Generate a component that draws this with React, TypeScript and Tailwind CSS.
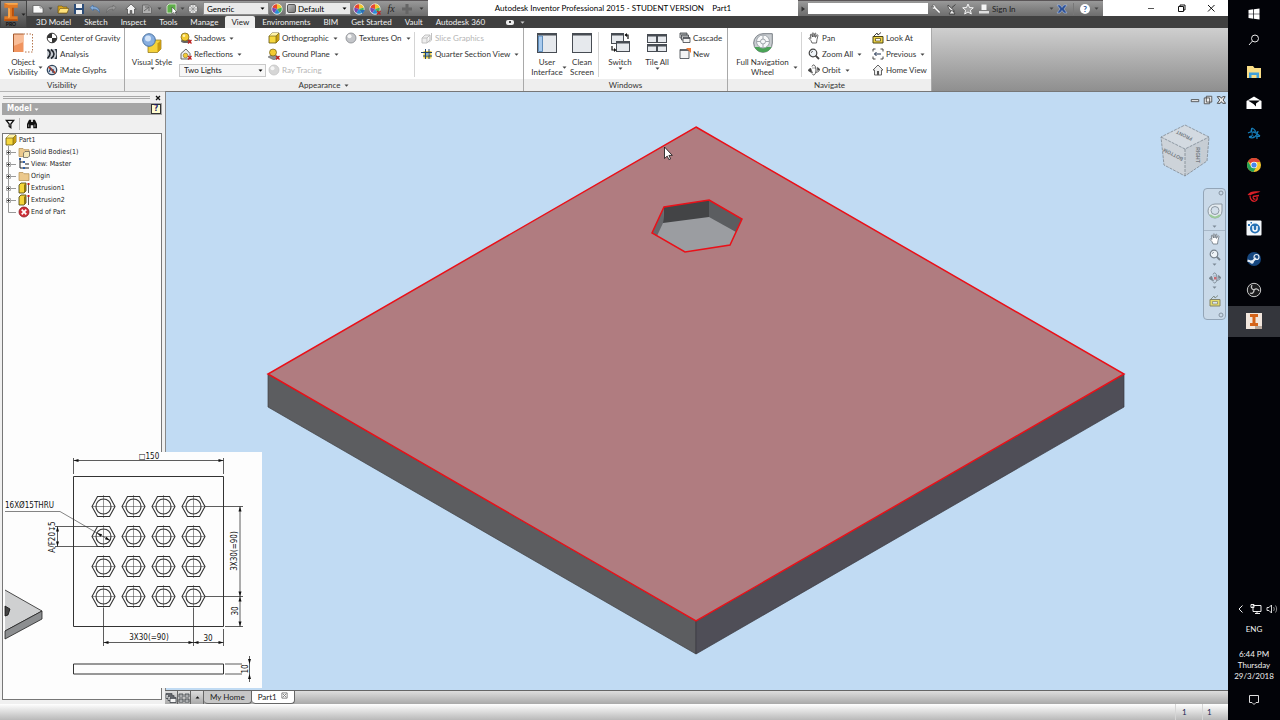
import type { ReactNode } from "react";

type IconProps = { children: ReactNode; className?: string; box?: string };

const Icon = ({ children, className = "size-3", box = "0 0 12 12" }: IconProps) => (
  <svg viewBox={box} className={`shrink-0 ${className}`} fill="none" aria-hidden="true">
    {children}
  </svg>
);

const Caret = ({ className = "text-[#444]" }: { className?: string }) => (
  <svg viewBox="0 0 5 3" className={`h-[3px] w-[5px] shrink-0 ${className}`} fill="currentColor" aria-hidden="true">
    <path d="M0.5 0.5h4L2.5 2.8z" />
  </svg>
);

/* ---------- shared icon pieces ---------- */

const RedX = () => <path d="M8 8l3.5 3.5M11.5 8L8 11.5" stroke="#c02020" strokeWidth="1.3" />;

const ColorWheel = () => (
  <>
    <circle cx="6" cy="6" r="5.2" fill="#eee" />
    <path d="M6 6L1 4.5A5.2 5.2 0 0 1 6 .8z" fill="#e8472e" />
    <path d="M6 6V.8a5.2 5.2 0 0 1 5 3.7z" fill="#f3c62f" />
    <path d="M6 6l5-1.5a5.2 5.2 0 0 1-2 5.7z" fill="#49b356" />
    <path d="M6 6l3 4.2a5.2 5.2 0 0 1-6 0z" fill="#2a8fd8" />
    <path d="M6 6l-3 4.2A5.2 5.2 0 0 1 1 4.5z" fill="#7b49b0" />
    <circle cx="6" cy="6" r="5.2" stroke="#eee" strokeWidth=".7" />
  </>
);

const InventorLetter = () => (
  <>
    <path d="M3 1h14v5h-4v9h4v5H3v-5h4V6H3z" fill="#e07a25" />
    <path d="M3 1l4 2h10V1zM7 6l2 1v9l-2 1z" fill="#f9a94f" />
    <path d="M11 6h2v9h-2zM3 18h14v2H3z" fill="#b6500e" />
  </>
);

const Sphere = ({ dim = false }: { dim?: boolean }) => (
  <>
    <circle cx="6" cy="6" r="5" fill={dim ? "#d6d6d6" : "#c3c5c9"} stroke={dim ? "#c4c4c4" : "#85888d"} strokeWidth=".8" />
    <circle cx="4.5" cy="4.3" r="2" fill="#f6f6f6" />
  </>
);

const YellowBox = () => (
  <>
    <path d="M1 4l3-3h7v7l-3 3H1z" fill="#f6d73e" stroke="#5f5210" strokeWidth=".8" />
    <path d="M1 4l3-3h7L8 4z" fill="#fff3a6" />
    <path d="M8 4l3-3v7l-3 3z" fill="#c79d12" />
    <path d="M1 4h7v7M8 4l3-3" stroke="#5f5210" strokeWidth=".6" />
  </>
);

const Hand = ({ stroke = "#444" }: { stroke?: string }) => (
  <path
    d="M4 11L3 8.7 1 6.5c0-1 1-1 2 0L2.3 3c0-1 1.2-1 1.4 0l.8 2-.2-3.5c0-1 1.2-1 1.4 0L6 5l.7-3.2c.2-1 1.3-.8 1.2.2L7.5 5.4l1.3-2.2c.5-.8 1.5-.3 1.1.6L9 7.5 8.5 11z"
    fill="#fff"
    stroke={stroke}
    strokeWidth=".8"
  />
);

const Magnifier = ({ stroke = "#444" }: { stroke?: string }) => (
  <>
    <circle cx="5" cy="5" r="3.8" stroke={stroke} strokeWidth="1.2" fill="#eef3f7" />
    <path d="M7.6 7.6l3.4 3.4" stroke={stroke} strokeWidth="1.8" />
    <path d="M3.3 5A1.7 1.7 0 0 1 5 3.3" stroke={stroke} strokeWidth=".7" />
  </>
);

const OrbitShape = ({ stroke = "#444" }: { stroke?: string }) => (
  <>
    <path d="M2 4.5C0 6 1 8 5 8.3M8 8.3c4-.5 4-3 1.5-4" stroke={stroke} strokeWidth=".9" />
    <path d="M4 2.5C5-.5 8 1 8 6c0 4.5-2.5 6.5-4 3.5" stroke={stroke} strokeWidth=".9" />
    <path d="M3.5 6.3v2.2L0 6.5 2.5 4zM9.5 6.5V3.3L12 5.5zM4 4h4" fill={stroke} stroke={stroke} strokeWidth=".5" />
  </>
);

const Arrows = ({ flip = false }: { flip?: boolean }) => (
  <path
    d={flip ? "M11 4.5L8 2v1.7C4 3.7 1.5 5.5 1.5 9.5 3 7 5 6 8 6v1.7z" : "M1 4.5L4 2v1.7c4 0 6.5 1.8 6.5 5.8C9 7 7 6 4 6v1.7z"}
    fill={flip ? "#999" : "#86aeda"}
    stroke={flip ? "#5c5c5c" : "#2f5f9a"}
    strokeWidth=".5"
  />
);

/* ---------- title bar ---------- */

const QuickButton = ({ name, children }: { name: string; children: ReactNode }) => (
  <button aria-label={name} className="flex w-4 shrink-0 items-center justify-center">
    <Icon>{children}</Icon>
  </button>
);

const QuickAccess = () => (
  <div className="flex h-4 w-[401px] shrink-0 items-center border-t border-[#5a5557] bg-linear-to-b from-[#999] to-[#6d6d6d]">
    <div className="flex items-center pl-[3px]">
      <QuickButton name="New">
        <path d="M1 2.5h7l3 2.5v5H1z" fill="#fafafa" stroke="#555" strokeWidth=".7" />
        <path d="M8 2.5V5h3" stroke="#777" strokeWidth=".7" />
      </QuickButton>
      <span className="mx-0.5"><Caret /></span>
      <QuickButton name="Open">
        <path d="M1 3h4l1 1h4v6H1z" fill="#d9a520" stroke="#6e5208" strokeWidth=".6" />
        <path d="M1 10l2-4.500h9L10 10z" fill="#ffe27c" stroke="#6e5208" strokeWidth=".6" />
      </QuickButton>
      <QuickButton name="Save">
        <path d="M1 1h10v10H1z" fill="#2c4c77" />
        <path d="M3 1h6v4H3zM3 7h6v4H3z" fill="#f3f3f3" />
      </QuickButton>
      <QuickButton name="Undo"><Arrows /></QuickButton>
      <QuickButton name="Redo"><Arrows flip /></QuickButton>
    </div>
    <div className="ml-1 flex items-center">
      <QuickButton name="Home">
        <path d="M6 1L.8 6h1.7v5h2.7V7.5h1.6V11h2.7V6h1.7z" fill="#f2f2f2" stroke="#444" strokeWidth=".7" />
      </QuickButton>
      <QuickButton name="Return">
        <path d="M1.5 2h6l3 3v5.5h-9z" fill="#b0b0b0" stroke="#5f5f5f" strokeWidth=".8" />
        <path d="M3 8l5-4M8 8V4H4" stroke="#666" />
      </QuickButton>
      <span className="mx-0.5"><Caret /></span>
      <QuickButton name="Select">
        <path d="M1 3l2-2h7v7l-2 2H1z" fill="#5fae4a" stroke="#e5f3dc" strokeWidth=".8" />
        <path d="M6 4v7l1.7-1.5L9 12l1-.5L9 9h2z" fill="#fff" stroke="#333" strokeWidth=".5" />
      </QuickButton>
      <Caret />
      <QuickButton name="Appearance">
        <circle cx="6" cy="6" r="4.8" fill="#e3e3e3" stroke="#666" />
        <path d="M6 1v10M1 6h10M2.5 2.5l7 7M9.5 2.5l-7 7" stroke="#888" strokeWidth=".6" />
      </QuickButton>
    </div>
    <div className="flex flex-1 items-center pl-0.5">
      <div className="relative flex w-[66px] items-center">
        <select aria-label="Material" defaultValue="Generic" className="h-[13px] w-full appearance-none border border-[#8c8c8c] bg-[#e9e9e9] pl-[3px] leading-none text-black">
          <option>Generic</option>
        </select>
        <span className="pointer-events-none absolute right-1 flex"><Caret className="text-black" /></span>
      </div>
      <QuickButton name="Adjust colors"><ColorWheel /></QuickButton>
      <div className="relative flex w-[66px] items-center">
        <select aria-label="Appearance override" defaultValue="Default" className="h-[13px] w-full appearance-none border border-[#8c8c8c] bg-[#e9e9e9] pl-3 leading-none text-black">
          <option>Default</option>
        </select>
        <span className="pointer-events-none absolute left-0.5 size-[9px] rounded-xs border border-[#555] bg-linear-to-br from-[#bbb] to-[#777]" />
        <span className="pointer-events-none absolute right-1 flex"><Caret className="text-black" /></span>
      </div>
      <QuickButton name="Add appearance">
        <ColorWheel />
        <path d="M7 7h5l-2.5 4z" fill="#2a6fb8" />
      </QuickButton>
      <QuickButton name="Clear appearance"><ColorWheel /><RedX /></QuickButton>
      <button className="w-4 text-center font-['Liberation_Serif',serif] text-[10px] leading-none text-[#222] italic">fx</button>
      <QuickButton name="Add">
        <path d="M4.5 1h3v3.5H11v3H7.5V11h-3V7.5H1v-3h3.5z" fill="#656565" />
      </QuickButton>
      <span className="ml-1"><Caret className="text-[#333]" /></span>
    </div>
  </div>
);

const InfoCenter = () => (
  <div className="flex h-4 w-[305px] shrink-0 items-center border-t border-[#5a5557] bg-linear-to-b from-[#999] to-[#6d6d6d] pr-1 pl-0.5">
    <Icon className="mr-0.5 size-1.5" box="0 0 6 6"><path d="M1.5 .5v5L5 3z" fill="#333" /></Icon>
    <input aria-label="Search help" className="h-[11px] w-[120px] bg-white px-1" />
    <QuickButton name="Subscription">
      <path d="M2 2.5a2.5 2.5 0 0 1 4 2L10.500 9l-1.300 1.500L4.600 6A2.500 2.500 0 0 1 1.500 3.500L3 4.700l1-1z" fill="#fff" stroke="#444" strokeWidth=".5" />
    </QuickButton>
    <QuickButton name="Communication">
      <path d="M2 2c0 4 2 6 6.500 6zM5 8l-2 3h6L7 8M6 4.500l3.500-3" fill="#eee" stroke="#333" strokeWidth=".8" />
    </QuickButton>
    <QuickButton name="Favorites">
      <path d="M6 1l1.500 3.500 3.800.3-2.900 2.500.9 3.700L6 9l-3.300 2 .9-3.700L.7 4.800l3.800-.3z" fill="#999" stroke="#fff" strokeWidth=".9" />
    </QuickButton>
    <QuickButton name="Account">
      <path d="M3.500 1.500h5V7h-5z" fill="#f5f5f5" />
      <path d="M1 8h10v2.500H1z" fill="#ddd" />
    </QuickButton>
    <button className="flex w-[62px] items-center justify-between text-[#222]">
      Sign In
      <Caret className="text-[#444]" />
    </button>
    <QuickButton name="Exchange apps">
      <path d="M1 2h3l2 2.500L8 2h3L8 6l3 4H8L6 7.500 4 10H1l3-4z" fill="#2a4f96" stroke="#b9cdf0" strokeWidth=".5" />
    </QuickButton>
    <span className="ml-[3px] h-3 w-px bg-[#777]" />
    <button aria-label="Help" className="ml-1.5 flex size-2.5 shrink-0 items-center justify-center rounded-full bg-white leading-none font-bold text-[#2f5597]">?</button>
    <span className="ml-auto"><Caret /></span>
  </div>
);

const TitleBar = () => (
  <div className="flex h-4 bg-white">
    <QuickAccess />
    <h1 className="min-w-0 flex-1 text-center leading-4 whitespace-pre text-black">
      {"Autodesk Inventor Professional 2015 - STUDENT VERSION    Part1"}
    </h1>
    <InfoCenter />
    <div className="flex w-[125px] shrink-0 items-center justify-end gap-[18px] pr-[11px]">
      <button aria-label="Minimize"><Icon><path d="M3 6.500h6" stroke="#555" /></Icon></button>
      <button aria-label="Restore"><Icon><path d="M3.500 4.500h5v5h-5zM5 4.500V3h5v5H8.500" stroke="#111" /></Icon></button>
      <button aria-label="Close"><Icon><path d="M3 3l6.500 6.500M9.500 3L3 9.500" stroke="#111" /></Icon></button>
    </div>
  </div>
);

const tabs = ["3D Model", "Sketch", "Inspect", "Tools", "Manage", "View", "Environments", "BIM", "Get Started", "Vault", "Autodesk 360"];

const TabRow = () => (
  <nav className="flex h-3 items-stretch gap-px bg-[#404040] pl-[3px]">
    {tabs.map((tab) => (
      <button
        key={tab}
        className={`rounded-t-xs px-1.5 leading-3 whitespace-nowrap ${tab === "View" ? "bg-[#efefef] text-[#222]" : "text-[#f0f0f0]"}`}
      >
        {tab}
      </button>
    ))}
    <button aria-label="Minimize ribbon" className="ml-3.5 flex items-center gap-1.5">
      <span className="flex h-[5px] w-2 items-center justify-center rounded-xs bg-[#eee]">
        <span className="size-0.5 bg-[#444]" />
      </span>
      <Caret className="text-[#ccc]" />
    </button>
  </nav>
);

/* ---------- ribbon ---------- */

type ToolProps = { label: string; icon: ReactNode; caret?: boolean; disabled?: boolean };

const Tool = ({ label, icon, caret, disabled }: ToolProps) => (
  <button disabled={disabled} className="flex h-4 items-center gap-0.5 whitespace-nowrap text-[#333] disabled:text-[#b5b5b5]">
    <Icon>{icon}</Icon>
    <span>{label}</span>
    {caret && <span className="ml-0.5 flex"><Caret /></span>}
  </button>
);

type BigToolProps = { lines: string[]; icon: ReactNode; width: string; caret?: "side" | "below" };

const BigTool = ({ lines, icon, width, caret }: BigToolProps) => (
  <button className={`relative flex shrink-0 flex-col items-center pt-[3px] leading-[10px] text-[#333] ${width}`}>
    <Icon className="mb-1 size-5" box="0 0 20 20">{icon}</Icon>
    {lines.map((line) => (
      <span key={line} className="whitespace-nowrap">{line}</span>
    ))}
    {caret === "below" && <Caret />}
    {caret === "side" && <span className="absolute -right-px bottom-2.5"><Caret /></span>}
  </button>
);

const Divider = () => <span className="my-0.5 w-px shrink-0 bg-[#d4d4d4]" />;

type PanelProps = { title: string; width: string; caret?: boolean; children: ReactNode };

const RibbonPanel = ({ title, width, caret, children }: PanelProps) => (
  <section className={`flex shrink-0 flex-col border-r border-[#a9a9a9] bg-white ${width}`}>
    <div className="flex h-[51px] pt-0.5">{children}</div>
    <h2 className="flex h-3 items-center justify-center gap-1 bg-[#eee] text-[#333]">
      {title}
      {caret && <Caret />}
    </h2>
  </section>
);

const windowFrame = (x: number, y: number, w: number, h: number) => (
  <>
    <rect x={x + 0.5} y={y + 0.5} width={w - 1} height={h - 1} fill="#e6e9ed" stroke="#474c53" />
    <rect x={x} y={y} width={w} height="2.500" fill="#474c53" />
  </>
);

// lighter frame for the 12px icons
const smallFrame = (x: number, y: number, w: number, h: number) => (
  <path d={`M${x} ${y}h${w}v${h}h-${w}zM${x} ${y + 1}h${w}`} fill="#f4f4f4" stroke="#3d4148" strokeWidth=".8" />
);

const VisibilityPanel = () => (
  <RibbonPanel title="Visibility" width="w-[125px]">
    <div className="flex pl-1">
      <BigTool
        width="w-[38px]"
        lines={["Object", "Visibility"]}
        caret="side"
        icon={
          <>
            <path d="M.5 1h10v18H.5z" fill="#f0945f" />
            <path d="M.5 1h10v8L.5 13z" fill="#f8bd98" />
            <path d="M10.500 1h9v18h-9" stroke="#b5764e" strokeDasharray="1.500 1.500" />
            <path d="M.5 19V1h10" stroke="#a55a2e" />
          </>
        }
      />
    </div>
    <div className="flex flex-col pl-1">
      <Tool
        label="Center of Gravity"
        icon={
          <>
            <circle cx="6" cy="6" r="4.8" fill="#fff" stroke="#333" />
            <path d="M6 6V1.200A4.800 4.800 0 0 0 1.200 6zM6 6v4.800A4.800 4.800 0 0 0 10.800 6z" fill="#333" />
          </>
        }
      />
      <Tool
        label="Analysis"
        icon={
          <>
            <path d="M1 1h10v10H1z" fill="#c9ced4" />
            <path d="M1.500 1.500c3 2 4 5 0 9M5 1.500c4 3 4 6 0 9" stroke="#1f252c" strokeWidth="1.600" />
            <path d="M8.500 1H11v10H8.500c2.500-3 2.500-7 0-10z" fill="#333c47" />
          </>
        }
      />
      <Tool
        label="iMate Glyphs"
        icon={
          <>
            <circle cx="6" cy="6" r="4.7" fill="#d7e0ea" stroke="#33475c" strokeWidth="1.300" />
            <path d="M3 3l6 6" stroke="#c8401f" strokeWidth="2" />
            <path d="M3 8l2-4M7 9V5" stroke="#2b4a74" strokeWidth="1.200" />
          </>
        }
      />
    </div>
  </RibbonPanel>
);

const AppearancePanel = () => (
  <RibbonPanel title="Appearance" width="w-[399px]" caret>
    <BigTool
      width="w-[54px]"
      lines={["Visual Style"]}
      caret="below"
      icon={
        <>
          <path d="M6 10l3-3h10v9l-3.500 3.500H6z" fill="#f5d23a" stroke="#8a7011" strokeWidth=".7" />
          <path d="M15.500 10.500L19 7v9l-3.500 3.500z" fill="#c99a12" />
          <circle cx="7" cy="7" r="6.300" fill="#87aee0" stroke="#49719f" />
          <circle cx="6" cy="5.500" r="3" fill="#d3e4f8" />
        </>
      }
    />
    <div className="flex w-[89px] flex-col pl-px">
      <Tool
        label="Shadows"
        caret
        icon={
          <>
            <ellipse cx="6" cy="9" rx="5" ry="2" fill="#666" />
            <circle cx="5" cy="5" r="4" fill="#f3cb32" stroke="#6e5c13" strokeWidth=".7" />
            <circle cx="4" cy="3.800" r="1.300" fill="#fff3b0" />
            <RedX />
          </>
        }
      />
      <Tool
        label="Reflections"
        caret
        icon={
          <>
            <path d="M1 11V5.500L6 1l4 4.500V11z" fill="#eee" stroke="#555" strokeWidth=".9" />
            <circle cx="5.500" cy="7.500" r="2.300" fill="#f3cb32" stroke="#6e5c13" strokeWidth=".5" />
            <RedX />
          </>
        }
      />
      <div className="relative flex h-4 w-[87px] items-center">
        <select aria-label="Lighting" defaultValue="Two Lights" className="-ml-px h-[13px] w-full appearance-none border border-[#c9c9c9] bg-[#f7f7f7] pl-1 leading-none text-[#222]">
          <option>Two Lights</option>
        </select>
        <span className="pointer-events-none absolute right-1 flex"><Caret className="text-black" /></span>
      </div>
    </div>
    <div className="flex w-[77px] flex-col">
      <Tool label="Orthographic" caret icon={<YellowBox />} />
      <Tool
        label="Ground Plane"
        caret
        icon={
          <>
            <path d="M0 9l5-3 6 3-5 3z" fill="#8f9499" stroke="#555" strokeWidth=".5" />
            <circle cx="5" cy="4.500" r="3.500" fill="#f3cb32" stroke="#6e5c13" strokeWidth=".7" />
            <RedX />
          </>
        }
      />
      <Tool label="Ray Tracing" disabled icon={<Sphere dim />} />
    </div>
    <div className="w-[69px]">
      <Tool label="Textures On" caret icon={<Sphere />} />
    </div>
    <Divider />
    <div className="flex flex-col pl-1.5">
      <Tool
        label="Slice Graphics"
        disabled
        icon={<path d="M1 6h5v5H1zM1 6l3-3h5L6 6M9 3v5l-3 3M10.500 1v7L8 10.500" fill="#eee" stroke="#bbb" strokeWidth=".9" />}
      />
      <Tool
        label="Quarter Section View"
        caret
        icon={
          <>
            <path d="M2.500 3h8v7.500h-8z" fill="#f0d146" />
            <path d="M0 4.500h11M2 8h9M4.500 1v10M8 1v10" stroke="#22456b" />
            <path d="M5 5h2.500v2.500H5z" fill="#7fb2e5" />
          </>
        }
      />
    </div>
  </RibbonPanel>
);

const WindowsPanel = () => (
  <RibbonPanel title="Windows" width="w-[204px]">
    <div className="flex pl-1">
      <BigTool
        width="w-[38px]"
        lines={["User", "Interface"]}
        caret="side"
        icon={
          <>
            {windowFrame(0, 0, 20, 20)}
            <path d="M1.500 3h4v15.500h-4z" fill="#a9cbee" stroke="#4478ad" strokeWidth=".8" />
          </>
        }
      />
      <BigTool width="w-8" lines={["Clean", "Screen"]} icon={windowFrame(0, 0, 20, 20)} />
    </div>
    <Divider />
    <BigTool
      width="w-[42px]"
      lines={["Switch"]}
      caret="below"
      icon={
        <>
          {windowFrame(1, 0, 13, 11)}
          {windowFrame(6, 8, 14, 11)}
          <path d="M15 2h3v4M2 13v4h3" stroke="#111" strokeWidth="1.200" />
          <path d="M14.500 2L17 0v4zM6.500 17L4 15v4z" fill="#111" />
        </>
      }
    />
    <BigTool
      width="w-8"
      lines={["Tile All"]}
      caret="below"
      icon={
        <>
          {windowFrame(0, 1, 10, 9)}
          {windowFrame(10, 1, 10, 9)}
          {windowFrame(0, 11, 10, 8)}
          {windowFrame(10, 11, 10, 8)}
        </>
      }
    />
    <div className="flex flex-col pl-1.5">
      <Tool label="Cascade" icon={<>{smallFrame(1, 1, 7, 5)}{smallFrame(2.5, 3, 7, 5)}{smallFrame(4, 5.5, 7, 5)}</>} />
      <Tool label="New" icon={<>{smallFrame(1, 1.5, 9, 9)}<path d="M7 0h5v5z" fill="#ef7a35" /></>} />
    </div>
  </RibbonPanel>
);

const NavigatePanel = () => (
  <RibbonPanel title="Navigate" width="w-[204px]">
    <BigTool
      width="w-[69px]"
      lines={["Full Navigation", "Wheel"]}
      caret="side"
      icon={
        <>
          <path d="M10 .7h9.300V10A9.300 9.300 0 1 1 10 .7z" fill="#c9cdd1" stroke="#777d84" />
          <path d="M1.500 14h17A9.500 9.500 0 0 1 1.500 14z" fill="#4aa356" />
          <circle cx="10" cy="8.500" r="6.500" fill="#f7f8f9" stroke="#a0a6ac" />
          <path d="M10 2v13M3.500 8.500h13" stroke="#a0a6ac" />
          <circle cx="10" cy="8.500" r="2.500" fill="#f7f8f9" stroke="#a0a6ac" />
        </>
      }
    />
    <span className="w-1" />
    <Divider />
    <div className="flex w-[70px] flex-col pl-1.5">
      <Tool label="Pan" icon={<Hand />} />
      <Tool label="Zoom All" caret icon={<Magnifier />} />
      <Tool label="Orbit" caret icon={<OrbitShape />} />
    </div>
    <div className="flex flex-col">
      <Tool
        label="Look At"
        icon={
          <>
            <path d="M1 4.500h10V11H1z" fill="#efd447" stroke="#4a4415" />
            <path d="M3.500 6.500h5v2.500h-5z" fill="#fff" stroke="#4a4415" strokeWidth=".7" />
            <path d="M2 4l3-3 1 2 3-2.500" stroke="#444" />
          </>
        }
      />
      <Tool
        label="Previous"
        caret
        icon={
          <>
            <path d="M1 3.500V1h2.500M8.500 1H11v2.500M11 8.500V11H8.500M3.500 11H1V8.500" stroke="#444" />
            <path d="M2.500 6H9M4.500 4l-2 2 2 2" stroke="#1d2f4d" />
          </>
        }
      />
      <Tool
        label="Home View"
        icon={
          <>
            <path d="M6 1L1 6h1.500v5h7V6H11z" fill="#f1f1f1" stroke="#555" strokeWidth=".9" />
            <path d="M5 7h2v4H5z" fill="#555" />
          </>
        }
      />
    </div>
  </RibbonPanel>
);

const Ribbon = () => (
  <div className="flex bg-linear-to-b from-[#cfcfcf] to-[#8f8f8f]">
    <VisibilityPanel />
    <AppearancePanel />
    <WindowsPanel />
    <NavigatePanel />
  </div>
);

/* ---------- model browser ---------- */

const folder = <path d="M1 2.500h4l1 1.200h5V10.500H1z" fill="#ecc98d" stroke="#b08a4c" strokeWidth=".7" />;

const extrusion = (
  <>
    <path d="M1 3l2-2h5v8l-2 2H1z" fill="#f5d53a" stroke="#403a10" strokeWidth=".8" />
    <path d="M6 3l2-2v8l-2 2z" fill="#8c7410" />
    <path d="M10.500 2v9" stroke="#333" strokeWidth=".8" />
    <path d="M9.500 1h2v2h-2z" fill="#c42020" />
  </>
);

const treeItems: { label: string; icon: ReactNode; leaf?: boolean }[] = [
  {
    label: "Solid Bodies(1)",
    icon: (
      <>
        {folder}
        <path d="M5.500 7l1.500-1.500h4.500V10L10 11.500H5.500z" fill="#f5e7b8" stroke="#555" strokeWidth=".7" />
      </>
    ),
  },
  {
    label: "View: Master",
    icon: (
      <>
        <path d="M2 1v9h3M2 4h3M7 10h4M7 6h4" stroke="#222" />
        <path d="M1 0h2v2H1zM5 3h2v2H5zM5 9h2v2H5z" fill="#2f5fa8" />
      </>
    ),
  },
  { label: "Origin", icon: folder },
  { label: "Extrusion1", icon: extrusion },
  { label: "Extrusion2", icon: extrusion },
  {
    label: "End of Part",
    leaf: true,
    icon: (
      <>
        <circle cx="6" cy="6" r="5" fill="#cf3038" stroke="#8c1b22" strokeWidth=".8" />
        <path d="M3.700 3.700l4.600 4.600M8.300 3.700L3.700 8.300" stroke="#fff" strokeWidth="1.700" />
      </>
    ),
  },
];

const ModelBrowser = () => (
  <aside className="flex w-[165px] shrink-0 flex-col border-t border-[#b5b5b5] bg-[#f0f0f0] px-0.5 pr-[3px] pb-1 font-['DejaVu_Sans_Condensed','DejaVu_Sans',sans-serif] text-[7px] text-[#222]">
    <div className="flex h-[11px] items-center gap-1 pl-px">
      <span className="h-[3px] flex-1 border-y border-[#a8a8a8]" />
      <button aria-label="Close browser">
        <Icon className="size-2" box="0 0 8 8"><path d="M2 2l4 4M6 2L2 6" stroke="#111" strokeWidth="1.300" /></Icon>
      </button>
    </div>
    <div className="flex h-3 items-center bg-[#a5a5a5] pr-px pl-[5px]">
      <h2 className="text-[8px] font-bold text-white">Model</h2>
      <span className="ml-0.5"><Caret className="text-white" /></span>
      <button aria-label="Browser help" className="ml-auto flex size-2.5 items-center justify-center border border-[#333] bg-[#fffcd0] text-[8px] leading-none font-bold text-[#1b1b6b]">?</button>
    </div>
    <div className="flex h-[18px] items-center gap-1">
      <button aria-label="Filter" className="ml-[3px]">
        <Icon className="size-2.5"><path d="M1.500 1.500h9L7 6v4.500L5 9V6z" fill="#eee" stroke="#111" strokeWidth="1.500" /></Icon>
      </button>
      <span className="h-3 w-px bg-[#b9b9b9]" />
      <button aria-label="Find" className="ml-[3px]">
        <Icon className="size-2.5">
          <path d="M2.500 1h2.500v2.500h2V1h2.500L12 6v5H7.500V7.500h-3V11H0V6z" fill="#111" />
          <path d="M2 6.500v3M9.500 6.500v3" stroke="#ccc" strokeWidth=".8" />
        </Icon>
      </button>
    </div>
    <div className="flex-1 border border-[#777] bg-[#fdfdfd]">
      <ul>
        <li>
          <span className="flex h-3 items-center gap-0.5 pl-0.5">
            <Icon><YellowBox /></Icon>
            Part1
          </span>
          <ul>
            {treeItems.map((item) => (
              <li key={item.label} className="flex h-3 items-center">
                <Icon className="ml-px h-3 w-3.5" box="0 0 14 12">
                  <path d={item.leaf ? "M4.500 0v6.500H12" : "M4.500 0v12M4.500 6.500H12"} stroke="#999" />
                  {!item.leaf && (
                    <>
                      <path d="M2.500 4.500h4v4h-4z" fill="#fff" stroke="#aaa" />
                      <path d="M3 6.500h3M4.500 5v3" stroke="#333" strokeWidth=".9" />
                    </>
                  )}
                </Icon>
                <Icon className="mr-px size-3">{item.icon}</Icon>
                {item.label}
              </li>
            ))}
          </ul>
        </li>
      </ul>
    </div>
  </aside>
);

/* ---------- viewport ---------- */

const PartScene = () => (
  <svg viewBox="166 92 1062 598" className="absolute inset-0 size-full" role="img" aria-label="Part with hexagonal pocket">
    <path d="M268 374l428 247v33L268 407z" fill="#5c5d60" stroke="#3f4144" strokeWidth=".7" />
    <path d="M696 621l428-247v33L696 654z" fill="#4f4e57" stroke="#3b3b42" strokeWidth=".7" />
    <path d="M696 127l428 247-428 247-428-247z" fill="#b07c80" stroke="#ea1018" strokeWidth="1.500" />
    <path d="M709 200l33 19-12 26-45 7-33-19 12-26z" fill="#9b9da1" />
    <path d="M664 207l45-7v17l-46 6z" fill="#434446" />
    <path d="M709 200l33 19-6 13-27-15z" fill="#5b5d60" />
    <path d="M664 207l-12 26 5 3 6-13z" fill="#66686c" />
    <path d="M709 200l33 19-12 26-45 7-33-19 12-26z" fill="none" stroke="#ea1018" strokeWidth="1.500" />
    <path d="M664.500 147v11.500l2.700-2.400 1.700 3.500 1.700-.8-1.700-3.400h3.400z" fill="#fff" stroke="#111" strokeWidth=".8" />
  </svg>
);

const ViewCube = () => (
  <svg viewBox="0 0 50 54" className="absolute top-8 right-[18px] h-[54px] w-[50px]" role="img" aria-label="View cube">
    <path d="M25 1l24 12-24 12L1 13z" fill="#d3dae1" />
    <path d="M1 13l24 12v27L4 41z" fill="#cdd3d9" />
    <path d="M49 13L25 25v27l22-15z" fill="#c6cdd4" />
    <path d="M25 1l24 12-2 24-22 15L4 41 1 13zM1 13l24 12 24-12M25 25v27" fill="none" stroke="#7f8890" strokeWidth=".8" strokeDasharray="3 1" />
    <g fill="#747b82" textAnchor="middle" fontSize="5" fontWeight="bold" fontFamily="Liberation Sans, sans-serif">
      <text transform="translate(25 10) rotate(206)">FRONT</text>
      <text transform="translate(14 29) rotate(207)">BOTTOM</text>
      <text transform="translate(36 31) rotate(90)">RIGHT</text>
    </g>
  </svg>
);

const NavButton = ({ name, children }: { name: string; children: ReactNode }) => (
  <button aria-label={name} className="flex h-4 items-center justify-center">
    <Icon>{children}</Icon>
  </button>
);

const NavigationBar = () => (
  <div className="absolute top-24 right-0.5 flex w-[23px] flex-col items-center rounded-sm border border-[#93a5b7] bg-[#c9d9e8]">
    <button aria-label="Close bar" className="self-end">
      <Icon className="size-2" box="0 0 8 8"><circle cx="4" cy="4" r="2" stroke="#8693a0" /></Icon>
    </button>
    <button aria-label="Full Navigation Wheel" className="py-1.5">
      <Icon className="size-4" box="0 0 16 16">
        <path d="M8 1h7v7a7 7 0 1 1-7-7z" fill="#e4ebf0" stroke="#8d99a3" />
        <path d="M3 12c3 3 7 3 10 0" stroke="#9ccb9c" strokeWidth="2" />
        <circle cx="8" cy="7.500" r="4" fill="#d3dfea" stroke="#8d99a3" />
      </Icon>
    </button>
    <Caret className="text-[#7d8a96]" />
    <span className="mt-0.5 h-px w-full bg-[#a8b8c8]" />
    <NavButton name="Pan"><Hand stroke="#6b757e" /></NavButton>
    <NavButton name="Zoom"><Magnifier stroke="#77828c" /></NavButton>
    <Caret className="text-[#7d8a96]" />
    <span className="h-1" />
    <NavButton name="Orbit">
      <OrbitShape stroke="#77828c" />
      <path d="M5 5h2.500v2.500H5z" fill="#c96a72" />
    </NavButton>
    <Caret className="text-[#7d8a96]" />
    <span className="h-1" />
    <NavButton name="Look At">
      <path d="M1 4.500h10V11H1z" fill="#e6dc6a" stroke="#84846a" />
      <path d="M3.500 6.500h5v2.500h-5z" fill="#dde6ee" stroke="#84846a" strokeWidth=".7" />
      <path d="M2 4l3-3 1 2 3-2.500" stroke="#84908a" />
    </NavButton>
    <button aria-label="Bar options" className="mt-0.5 self-end">
      <Icon className="size-2" box="0 0 8 8"><circle cx="4" cy="4" r="2" stroke="#8693a0" /></Icon>
    </button>
  </div>
);

const Viewport = () => (
  <main className="relative flex-1 border-t border-l border-t-[#777] border-l-[#888] bg-[#c1dbf3]">
    <PartScene />
    <div className="absolute top-[3px] right-0.5 flex gap-[3px]">
      <button aria-label="Minimize document"><Icon className="size-2.5"><path d="M1.500 5.500h9v2.500h-9z" fill="#eee" stroke="#444" /></Icon></button>
      <button aria-label="Restore document"><Icon className="size-2.5"><path d="M4 1.500h6.500v7H4zM1.500 3.500H8v7H1.500z" fill="#eee" stroke="#444" /></Icon></button>
      <button aria-label="Close document"><Icon className="size-2.5"><path d="M1.500 2H5l1.500 2L8 2h3L8.500 6l3 4H8L6.500 8 5 10H1.500l3-4z" fill="#eee" stroke="#333" /></Icon></button>
    </div>
    <ViewCube />
    <NavigationBar />
  </main>
);

/* ---------- drawing overlay ---------- */

const holeXs = [103.5, 133.5, 163.5, 193.5];
const holeYs = [506.5, 536.5, 566.5, 596.5];

const Hole = ({ x, y }: { x: number; y: number }) => (
  <g transform={`translate(${x} ${y})`}>
    <path d="M-11.500 0L-6 -10H6L11.500 0 6 10H-6z" strokeWidth="1.100" />
    <circle r="7.500" strokeWidth="1.100" />
    <path d="M-11.500 0h23M0 -11.500v23" strokeWidth=".5" />
  </g>
);

// arrowhead whose tip sits on x,y
const Tip = ({ x, y, angle }: { x: number; y: number; angle: number }) => (
  <path d="M0 0l-5-1.500v3z" fill="#111" stroke="none" transform={`translate(${x} ${y}) rotate(${angle})`} />
);

const DrawingSheet = () => (
  <svg
    viewBox="5 452 257 236"
    className="absolute bottom-8 left-[5px] h-[236px] w-[257px] overflow-visible bg-[#fdfdfd]"
    role="img"
    aria-label="Dimensioned plate drawing"
  >
    <g fill="none" stroke="#333" strokeWidth=".8">
      <path d="M73.500 476.500h150v150h-150zM73.500 664h150v10h-150z" strokeWidth="1" />
      {holeYs.map((y) => holeXs.map((x) => <Hole key={`${x}-${y}`} x={x} y={y} />))}
      <path d="M73.500 474v-16M223.500 474v-16M73.500 460.500h150" />
      <path d="M205 506.500h38M205 596.500h38M225 626.500h18M240 506.500v120" />
      <path d="M103.500 608v38M193.500 608v38M223.500 629v17M103.500 642.500h120" />
      <path d="M225 664h17M225 674h17M249.500 656v26" />
      <path d="M5 511.500h55l50 29" strokeWidth=".6" />
      <path d="M55 526.500h43M55 546.500h43M57.500 526.500v20" />
    </g>
    <Tip x={73.5} y={460.5} angle={180} />
    <Tip x={223.5} y={460.5} angle={0} />
    <Tip x={240} y={506.5} angle={270} />
    <Tip x={240} y={596.5} angle={90} />
    <Tip x={240} y={596.5} angle={270} />
    <Tip x={240} y={626.5} angle={90} />
    <Tip x={103.5} y={642.5} angle={180} />
    <Tip x={193.5} y={642.5} angle={0} />
    <Tip x={193.5} y={642.5} angle={180} />
    <Tip x={223.5} y={642.5} angle={0} />
    <Tip x={249.5} y={664} angle={90} />
    <Tip x={249.5} y={674} angle={270} />
    <Tip x={57.5} y={526.5} angle={270} />
    <Tip x={57.5} y={546.5} angle={90} />
    <Tip x={97} y={533} angle={210} />
    <Tip x={110} y={540.5} angle={30} />
    <g fill="#111" fontSize="8" fontFamily="DejaVu Sans Condensed, DejaVu Sans, sans-serif">
      <text x="149" y="459" textAnchor="middle">□150</text>
      <text x="5" y="508">16XØ15THRU</text>
      <text x="149" y="640" textAnchor="middle">3X30(=90)</text>
      <text x="208" y="641" textAnchor="middle">30</text>
      <text transform="translate(237 551) rotate(-90)" textAnchor="middle">3X30(=90)</text>
      <text transform="translate(238 611) rotate(-90)" textAnchor="middle">30</text>
      <text transform="translate(248 669) rotate(-90)" textAnchor="middle">10</text>
      <text transform="translate(55 537) rotate(-90)" textAnchor="middle">A/F20↧5</text>
    </g>
    <path d="M5 590l37 21-37 20z" fill="#cfd0d1" />
    <path d="M5 590l37 21-37 20" fill="none" stroke="#222" strokeWidth=".8" />
    <path d="M42 611v8L5 639v-8z" fill="#8c8e90" stroke="#222" strokeWidth=".8" />
    <path d="M5 606l5 3-2 6-3 1z" fill="#444" stroke="#111" strokeWidth=".8" />
  </svg>
);

/* ---------- bottom bars ---------- */

const DocumentTabs = () => (
  <div className="flex h-3.5 border-t border-[#666] bg-linear-to-b from-[#dedede] to-[#a9a9a9] text-[#222]">
    <button aria-label="Cascade windows" className="border-r border-[#666]">
      <Icon>{smallFrame(1, 1.5, 6, 5)}{smallFrame(3, 3.5, 6, 5)}{smallFrame(5, 5.5, 6, 5)}</Icon>
    </button>
    <button aria-label="Tile windows" className="border-r border-[#666]">
      <Icon>{smallFrame(1, 2, 4, 3)}{smallFrame(7, 2, 4, 3)}{smallFrame(1, 7, 4, 3)}{smallFrame(7, 7, 4, 3)}</Icon>
    </button>
    <button aria-label="Show tabs" className="flex w-[13px] items-center justify-center border-r border-[#666]">
      <Icon className="h-[3px] w-[5px]" box="0 0 5 3"><path d="M.5 2.500h4L2.500 .2z" fill="#111" /></Icon>
    </button>
    <button className="rounded-b-sm border-r border-b border-[#666] bg-[#c6c6c6] px-1.5">My Home</button>
    <button className="flex items-center gap-1 rounded-b-sm border-r border-b border-[#666] bg-white px-1.5">
      Part1
      <Icon className="mb-1 size-[7px]" box="0 0 8 8"><path d="M1 1h6v6H1zM2 2l4 4M6 2L2 6" stroke="#777" /></Icon>
    </button>
  </div>
);

const StatusBar = () => (
  <footer className="flex h-4 justify-end bg-linear-to-b from-white to-[#b9b9b9] leading-4 text-[#1a2352]">
    <span className="w-[27px] border-l border-[#d5d5d5] pl-1.5">1</span>
    <span className="w-[26px] border-l border-[#d5d5d5] pl-1">1</span>
  </footer>
);

/* ---------- Windows taskbar ---------- */

const apps: { name: string; icon: ReactNode; active?: boolean }[] = [
  {
    name: "File Explorer",
    icon: (
      <>
        <path d="M1 2h6l1.500 2H15v10H1z" fill="#f9dd86" />
        <path d="M3 8.500h10V14h-2.500v-3h-5v3H3z" fill="#3fa0dc" />
      </>
    ),
  },
  {
    name: "Mail",
    icon: (
      <>
        <path d="M.5 6L8 1.500 15.500 6v8H.5z" fill="#fff" />
        <path d="M2 5.500h12L10 8.500v3L7.500 9z" fill="#05060a" />
      </>
    ),
  },
  {
    name: "Battle.net",
    icon: (
      <>
        <path d="M6 2c3 1 5 5 5 11M3 11c4 2 8 0 9-6M2 7c3-2 8-1 12 3" stroke="#1780bd" strokeWidth="1.200" />
        <path d="M6 2L5 6M3 11l3-1M14 10l-3 .500" stroke="#1780bd" strokeWidth="1.500" />
        <circle cx="8.500" cy="8" r="2.500" stroke="#126a9f" />
      </>
    ),
  },
  {
    name: "Chrome",
    icon: (
      <>
        <circle cx="8" cy="8" r="7" fill="#f3c52d" />
        <path d="M8 8L2 4.500A7 7 0 0 1 14.300 5H8z" fill="#dc4437" />
        <path d="M2 4.500A7 7 0 0 0 7.500 15L10.500 9.500 5 9.500z" fill="#23a15a" />
        <circle cx="8" cy="8" r="3.300" fill="#fff" />
        <circle cx="8" cy="8" r="2.600" fill="#4587ee" />
      </>
    ),
  },
  {
    name: "Garena",
    icon: (
      <>
        <path d="M1.500 7C4 3 8 3 14.500 3.500 12 5.500 8 4.500 4.500 7.500z" fill="#d81f27" />
        <path d="M4 8c0 4 3 6 5.500 5 1.500-.5 2-2 1.500-4M7 8.500l6-1M7 8.500c0 2 1 3 2.500 2.500" stroke="#d81f27" strokeWidth="1.300" />
      </>
    ),
  },
  {
    name: "Uplay",
    icon: (
      <>
        <rect x=".5" y=".5" width="15" height="15" rx="1" fill="#f3f7fa" />
        <circle cx="9" cy="8.500" r="5" fill="#2671b4" />
        <path d="M7 6v3c0 2.500 4 2.500 4 0V6" stroke="#fff" strokeWidth="1.500" />
        <path d="M2 4h2v2H2zM4.500 2H6v1.500H4.500z" fill="#2671b4" />
      </>
    ),
  },
  {
    name: "Steam",
    icon: (
      <>
        <circle cx="8" cy="8" r="7" fill="#16477f" />
        <path d="M1.500 9.500L6 11l4-4" stroke="#e6edf4" strokeWidth="2" />
        <circle cx="10.500" cy="6" r="2.500" stroke="#e6edf4" strokeWidth="1.200" />
        <circle cx="6" cy="11" r="1.800" fill="#e6edf4" />
      </>
    ),
  },
  {
    name: "OBS",
    icon: (
      <>
        <circle cx="8" cy="8" r="6.700" fill="#1c1c1e" stroke="#c9c9c9" />
        <path d="M8 8c-3-1-3-3-2-5M8 8c2-2 4-1 5 1M8 8c0 3-2 4-4 3" stroke="#c9c9c9" strokeWidth="1.300" />
      </>
    ),
  },
  {
    name: "Inventor",
    active: true,
    icon: (
      <>
        <path d="M0 0h16v16H0z" fill="#f1e6dd" />
        <path d="M4 1h8v3h-2.500v6H12v3H4v-3h2.500V4H4z" fill="#d4641a" />
        <path d="M9 13h7v3H9z" fill="#b9a99d" />
      </>
    ),
  },
];

const Taskbar = () => (
  <aside className="flex w-[52px] shrink-0 flex-col items-center bg-[#020308] text-[#f0f0f0]">
    <button aria-label="Start" className="flex h-7 items-center">
      <Icon><path d="M.5 2L5.300 1.300v4.400H.5zM6 1.200L11.500.5v5.200H6zM.5 6.300h4.800v4.400L.5 10zM6 6.300h5.500v5.200L6 10.800z" fill="#fff" /></Icon>
    </button>
    <button aria-label="Search" className="flex h-7 items-start pt-1.5">
      <Icon><circle cx="7" cy="4.500" r="3.500" stroke="#e8e8e8" /><path d="M4.500 7L1 11" stroke="#e8e8e8" /></Icon>
    </button>
    <div className="flex h-[281px] w-full flex-col">
      {apps.map((app) => (
        <button
          key={app.name}
          aria-label={app.name}
          className={`flex flex-1 items-center justify-center ${app.active ? "bg-[#34363c]" : ""}`}
        >
          <Icon className="size-4" box="0 0 16 16">{app.icon}</Icon>
        </button>
      ))}
    </div>
    <div className="mt-auto flex w-full items-center justify-end gap-1 pr-0.5">
      <button aria-label="Hidden icons"><Icon className="size-2.5" box="0 0 10 10"><path d="M6.500 1.500L3 5l3.500 3.500" stroke="#eee" /></Icon></button>
      <button aria-label="Network"><Icon><path d="M3 2.500h8v6H3zM5 10.500h5M7 8.500v2M1 1.500h3v3H1z" stroke="#eee" /></Icon></button>
      <button aria-label="Volume">
        <Icon>
          <path d="M1 4.500h2l2.500-2.500v8L3 7.500H1z" stroke="#eee" strokeWidth=".9" />
          <path d="M7.500 4c1 1.200 1 2.800 0 4M9.500 2.500c1.500 2 1.500 5 0 7" stroke="#aaa" strokeWidth=".8" />
        </Icon>
      </button>
    </div>
    <span className="mt-2 leading-3">ENG</span>
    <div className="mt-3.5 text-center leading-[11px]">
      <p>6:44 PM</p>
      <p>Thursday</p>
      <p>29/3/2018</p>
    </div>
    <button aria-label="Notifications" className="mt-3 mb-3.5">
      <Icon><path d="M1.500 1.500h9v7H8l-2 2-2-2H1.500z" stroke="#ddd" /></Icon>
    </button>
  </aside>
);

export default function App() {
  return (
    <div className="flex h-screen w-full overflow-hidden bg-[#f0f0f0] font-['Lato','Open_Sans',sans-serif] text-[8px]">
      <div className="relative flex min-w-0 flex-1 flex-col">
        <header>
          <div className="flex">
            <button aria-label="Application menu" className="flex h-7 w-[27px] shrink-0 items-center gap-0.5 border border-[#444] bg-linear-to-b from-[#8c8c8c] to-[#4a4a4a] pl-0.5">
              <span className="flex flex-col items-center">
                <Icon className="h-5 w-4" box="2 0 16 21"><InventorLetter /></Icon>
                <span className="text-[5px] leading-[5px] font-bold text-[#111]">PRO</span>
              </span>
              <Caret className="text-[#222]" />
            </button>
            <div className="min-w-0 flex-1">
              <TitleBar />
              <TabRow />
            </div>
          </div>
          <Ribbon />
        </header>
        <div className="flex min-h-0 flex-1">
          <ModelBrowser />
          <div className="flex min-w-0 flex-1 flex-col">
            <Viewport />
            <DocumentTabs />
          </div>
        </div>
        <StatusBar />
        <DrawingSheet />
      </div>
      <Taskbar />
    </div>
  );
}
